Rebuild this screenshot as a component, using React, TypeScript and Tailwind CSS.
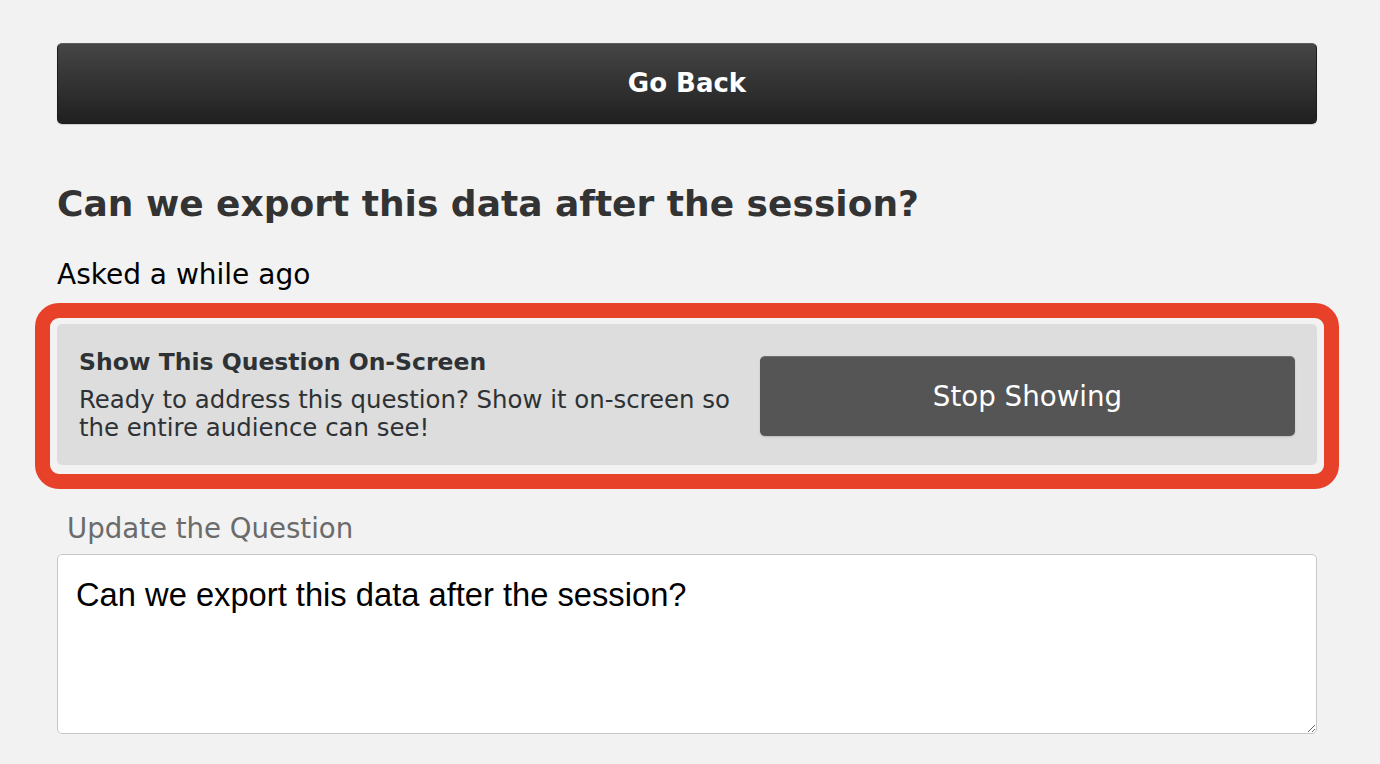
import React from 'react';

const sans = { fontFamily: '"DejaVu Sans", Verdana, sans-serif' };

const App = () => {
  return (
    <div className="min-h-screen bg-[#f2f2f2] pt-[43px] pl-[57px] pr-[63px]" style={sans}>
      <button className="w-full h-[81px] rounded-[5px] border border-[#1c1c1c] border-t-[#5e5e5e] bg-gradient-to-b from-[#464646] to-[#202020] text-white text-[26px] font-bold shadow-[0_1px_1px_rgba(0,0,0,0.15)]">
        Go Back
      </button>

      <h1 className="mt-[58px] text-[36px] leading-[44px] font-bold text-[#333333]">
        Can we export this data after the session?
      </h1>

      <p className="mt-[33px] text-[28px] leading-[32px] text-black">Asked a while ago</p>

      <div className="mt-[12px] -mx-[22px] border-[15px] border-[#e8412a] rounded-[24px] px-[7px] pt-[6px] pb-[9px]">
        <div className="h-[141px] bg-[#dddddd] rounded-[5px] flex items-center pl-[22px] pr-[22px] gap-[26px]">
          <div className="flex-1 text-[#2e3235]">
            <h3 className="text-[23.5px] leading-[28px] font-bold">Show This Question On-Screen</h3>
            <p className="mt-[10px] text-[24.4px] leading-[28px]">
              Ready to address this question? Show it on-screen so the entire audience can see!
            </p>
          </div>
          <button className="mt-[3px] w-[535px] h-[80px] shrink-0 rounded-[5px] bg-[#555555] border-t border-t-[#6e6e6e] text-white text-[27.7px] shadow-[0_1px_2px_rgba(0,0,0,0.15)]">
            Stop Showing
          </button>
        </div>
      </div>

      <label className="block mt-[24px] pl-[10px] text-[27.6px] leading-[32px] text-[#6b6b6b]">
        Update the Question
      </label>

      <textarea
        className="mt-[9px] block w-full h-[180px] bg-white border border-[#c8c8c8] rounded-[5px] pl-[18px] pt-[15px] text-[32.7px] text-black outline-none"
        style={{ fontFamily: '"Liberation Sans", Arial, sans-serif' }}
        defaultValue="Can we export this data after the session?"
      />
    </div>
  );
};

export default App;
